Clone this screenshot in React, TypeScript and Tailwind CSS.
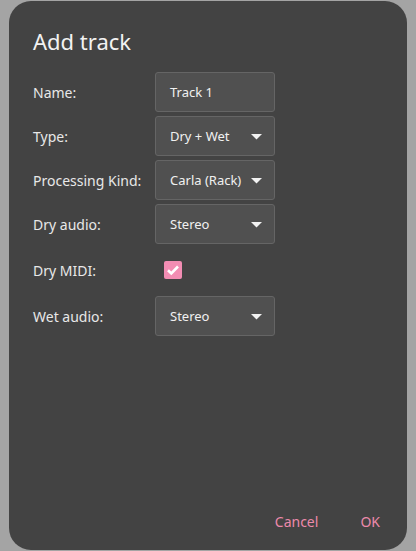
import React, { useState } from "react";

const font = { fontFamily: '"Noto Sans", "Open Sans", sans-serif' };

function Caret() {
  return (
    <svg width="11" height="6" viewBox="0 0 11 6" className="shrink-0">
      <path d="M0 0h11L5.5 5.5z" fill="#f2f2f2" />
    </svg>
  );
}

function Field({ children }: { children: React.ReactNode }) {
  return (
    <div className="flex h-[40px] w-[120px] items-center justify-between rounded-[3px] border border-[#656565] bg-[#505050] pl-[14px] pr-[12px] pt-[2px] text-[13px] text-[#f0f0f0]">
      {children}
    </div>
  );
}

function Row({ label, children, className = "" }: { label: string; children: React.ReactNode; className?: string }) {
  return (
    <div className={"flex items-center " + className}>
      <span className="w-[122px] text-[14px] text-[#e8e8e8]">{label}</span>
      {children}
    </div>
  );
}

export default function App() {
  const [midi, setMidi] = useState(true);
  return (
    <div className="h-[551px] w-[416px] overflow-hidden bg-[#a4a4a4] pl-[9px] pt-[1px]" style={font}>
      <div className="flex h-[549px] w-[398px] flex-col rounded-[22px] bg-[#434343] px-[24px]">
        <h1 className="mt-[26px] text-[22px] leading-[28px] text-[#f2f2f2]">Add track</h1>
        <div className="mt-[17px] flex flex-col gap-[4px]">
          <Row label="Name:">
            <Field>Track 1</Field>
          </Row>
          <Row label="Type:">
            <Field>
              Dry + Wet <Caret />
            </Field>
          </Row>
          <Row label="Processing Kind:">
            <Field>
              Carla (Rack) <Caret />
            </Field>
          </Row>
          <Row label="Dry audio:">
            <Field>
              Stereo <Caret />
            </Field>
          </Row>
          <Row label="Dry MIDI:" className="h-[44px]">
            <button
              onClick={() => setMidi(!midi)}
              className="ml-[9px] flex h-[18px] w-[18px] items-center justify-center rounded-[2px] bg-[#f28db3]"
            >
              {midi && (
                <svg width="14" height="12" viewBox="0 0 14 12">
                  <path d="M2 6.2l3.3 3.2L12 2.5" fill="none" stroke="#fff" strokeWidth="2.6" />
                </svg>
              )}
            </button>
          </Row>
          <Row label="Wet audio:">
            <Field>
              Stereo <Caret />
            </Field>
          </Row>
        </div>
        <div className="mt-auto mb-[18px] flex justify-end gap-[42px] pr-[3px] text-[14px] text-[#ec8aab]">
          <button>Cancel</button>
          <button>OK</button>
        </div>
      </div>
    </div>
  );
}
